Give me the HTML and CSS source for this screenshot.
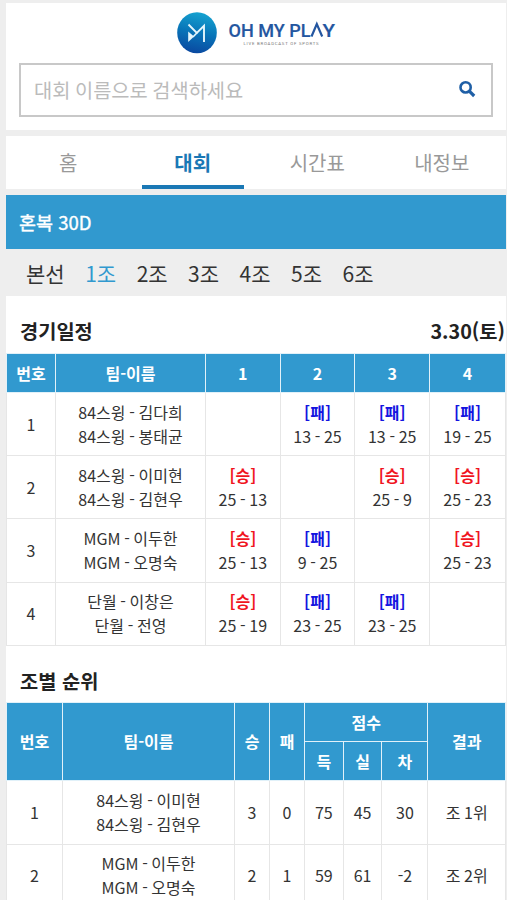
FILE: index.html
```
<!DOCTYPE html>
<html lang="ko">
<head>
    <meta charset="UTF-8">
    <title>OH MY PLAY</title>
    <link rel="stylesheet" href="styles.css">
</head>
<body>
<div class="page">
    <header class="header">
        <a class="logo">
            <svg class="logo-mark" width="40" height="42" viewBox="0 0 40 42">
                <defs>
                    <linearGradient id="mark" x1="0.6" y1="0" x2="0.4" y2="1">
                        <stop offset="0" stop-color="#16a3d0"/>
                        <stop offset="0.5" stop-color="#0874b8"/>
                        <stop offset="1" stop-color="#0a48a0"/>
                    </linearGradient>
                </defs>
                <ellipse cx="20" cy="20.7" rx="19.8" ry="20.5" fill="url(#mark)"/>
                <path d="M11.5 12.5 L19.8 21 L27 13.8 V30" fill="none" stroke="#e4f6fc" stroke-width="1.9"/>
                <path d="M11.2 19.5 L17 24.6 L11.2 30 Z" fill="#e4f6fc"/>
                <path d="M16 25 L20 20.8" fill="none" stroke="#e4f6fc" stroke-width="1.6"/>
            </svg>
            <svg class="logo-text" width="110" height="30" viewBox="0 0 110 30">
                <text class="brand" x="0.5" y="18.5" textLength="82" lengthAdjust="spacingAndGlyphs">OH MY PL</text>
                <path d="M83.5 18.5 L88.8 6 L94.2 18.5" fill="none" stroke="#2456a0" stroke-width="2.2"/>
                <text class="brand" x="94.5" y="18.5" textLength="12.5" lengthAdjust="spacingAndGlyphs">Y</text>
                <text class="slogan" x="15.5" y="27" textLength="75">LIVE BROADCAST OF SPORTS</text>
            </svg>
        </a>
        <div class="search">
            <span>대회 이름으로 검색하세요</span>
            <svg width="18" height="18" viewBox="0 0 18 18">
                <circle cx="7.6" cy="7.4" r="5.1" fill="none" stroke="#1f5fa6" stroke-width="2.6"/>
                <path d="M11.3 11.2 L16.2 16" stroke="#1f5fa6" stroke-width="3.2"/>
            </svg>
        </div>
    </header>

    <nav class="tabs">
        <a><span>홈</span></a>
        <a class="on"><span>대회</span></a>
        <a><span>시간표</span></a>
        <a><span>내정보</span></a>
    </nav>

    <div class="event">혼복 30D</div>
    <div class="groups">
        <a>본선</a>
        <a class="on">1조</a>
        <a>2조</a>
        <a>3조</a>
        <a>4조</a>
        <a>5조</a>
        <a>6조</a>
    </div>

    <div class="title"><h3>경기일정</h3><h3>3.30(토)</h3></div>
    <table class="schedule">
        <colgroup><col class="s-no"><col class="s-team"><col class="s-set"><col class="s-set"><col class="s-set"><col></colgroup>
        <tr><th>번호</th><th>팀-이름</th><th>1</th><th>2</th><th>3</th><th>4</th></tr>
        <tr>
            <td>1</td><td>84스윙 - 김다희<br>84스윙 - 봉태균</td>
            <td></td>
            <td><b class="lose">[패]</b><br>13 - 25</td>
            <td><b class="lose">[패]</b><br>13 - 25</td>
            <td><b class="lose">[패]</b><br>19 - 25</td>
        </tr>
        <tr>
            <td>2</td><td>84스윙 - 이미현<br>84스윙 - 김현우</td>
            <td><b class="win">[승]</b><br>25 - 13</td>
            <td></td>
            <td><b class="win">[승]</b><br>25 - 9</td>
            <td><b class="win">[승]</b><br>25 - 23</td>
        </tr>
        <tr>
            <td>3</td><td>MGM - 이두한<br>MGM - 오명숙</td>
            <td><b class="win">[승]</b><br>25 - 13</td>
            <td><b class="lose">[패]</b><br>9 - 25</td>
            <td></td>
            <td><b class="win">[승]</b><br>25 - 23</td>
        </tr>
        <tr>
            <td>4</td><td>단월 - 이창은<br>단월 - 전영</td>
            <td><b class="win">[승]</b><br>25 - 19</td>
            <td><b class="lose">[패]</b><br>23 - 25</td>
            <td><b class="lose">[패]</b><br>23 - 25</td>
            <td></td>
        </tr>
    </table>

    <div class="title"><h3>조별 순위</h3></div>
    <table class="ranking">
        <colgroup><col class="r-no"><col class="r-team"><col class="r-win"><col class="r-win"><col class="r-pt"><col class="r-pt"><col class="r-diff"><col></colgroup>
        <tr>
            <th rowspan="2">번호</th><th rowspan="2">팀-이름</th><th rowspan="2">승</th><th rowspan="2">패</th>
            <th colspan="3">점수</th><th rowspan="2">결과</th>
        </tr>
        <tr><th>득</th><th>실</th><th>차</th></tr>
        <tr>
            <td>1</td><td>84스윙 - 이미현<br>84스윙 - 김현우</td>
            <td>3</td><td>0</td><td>75</td><td>45</td><td>30</td><td>조 1위</td>
        </tr>
        <tr>
            <td>2</td><td>MGM - 이두한<br>MGM - 오명숙</td>
            <td>2</td><td>1</td><td>59</td><td>61</td><td>-2</td><td>조 2위</td>
        </tr>
    </table>
</div>
</body>
</html>
```

FILE: styles.css
```
* {
    box-sizing: border-box;
}

html {
    height: 100%;
    overflow: hidden;
}

body {
    margin: 0;
    height: 900px;
    overflow: hidden;
    padding: 3px 1px 0 6px;
    background-color: #eee;
    color: #333;
    font-family: "Noto Sans CJK KR", sans-serif;
    font-size: 16px;
}

.page {
    width: 500px;
    height: 897px;
    overflow: hidden;
    background-color: #fff;
}

/* header */
.header {
    height: 127px;
    padding: 9px 13px 0;
}

.logo {
    display: flex;
    height: 51px;
    padding-left: 158px;
}

.logo-text {
    margin: 6px 0 0 11px;
}

.brand {
    font-family: Roboto, sans-serif;
    font-size: 19px;
    font-weight: 500;
    fill: #2456a0;
    stroke: #2456a0;
    stroke-width: 0.2px;
}

.slogan {
    font-family: Roboto, sans-serif;
    font-size: 4.3px;
    fill: #777;
}

.search {
    display: flex;
    align-items: center;
    justify-content: space-between;
    height: 54px;
    padding: 0 15px 2px 13px;
    border: 2px solid #c8c8c8;
    color: #bbb;
    font-size: 19.8px;
    word-spacing: -1px;
}

/* tabs */
.tabs {
    display: flex;
    height: 65px;
    padding: 0 2px 0 0;
    border-top: 6px solid #eee;
    border-bottom: 6px solid #eee;
    color: #999;
    font-size: 20px;
    line-height: 53px;
}

.tabs a {
    flex: 1;
    padding: 0 11px;
    text-align: center;
}

.tabs span {
    display: block;
    height: 53px;
}

.tabs .on span {
    border-bottom: 4px solid #1a78b5;
    color: #1a78b5;
    font-weight: bold;
}

.event {
    height: 54px;
    padding-left: 13px;
    background-color: #3199cf;
    color: #fff;
    font-size: 18.5px;
    line-height: 54px;
    -webkit-text-stroke: 0.4px #fff;
}

.groups {
    display: flex;
    gap: 20.5px;
    height: 47px;
    padding-left: 20px;
    background-color: #eee;
    font-size: 21px;
    line-height: 49px;
}

.groups .on {
    color: #3199cf;
}

.title {
    display: flex;
    justify-content: space-between;
    height: 57px;
    padding: 6px 1px 0 14px;
    color: #222;
    line-height: 57px;
}

.title h3 {
    margin: 0;
    font-size: 19.8px;
}

.schedule + .title {
    height: 56.6px;
}

/* tables */
table {
    width: 500px;
    border-collapse: collapse;
    table-layout: fixed;
    line-height: 24px;
    text-align: center;
    word-spacing: -0.8px;
}

th,
td {
    padding: 0 0 1px;
    border: 1px solid #e6e6e6;
}

th {
    height: 39px;
    border-color: #e1f1f9;
    background-color: #3199cf;
    color: #fff;
}

td {
    height: 63.2px;
}

.s-no { width: 49px; }
.s-team { width: 150px; }
.s-set { width: 74.7px; }

.r-no { width: 56px; }
.r-team { width: 172px; }
.r-win { width: 35px; }
.r-pt { width: 38.7px; }
.r-diff { width: 46px; }

.win {
    color: #f0141e;
}

.lose {
    color: #1414e0;
}
```
